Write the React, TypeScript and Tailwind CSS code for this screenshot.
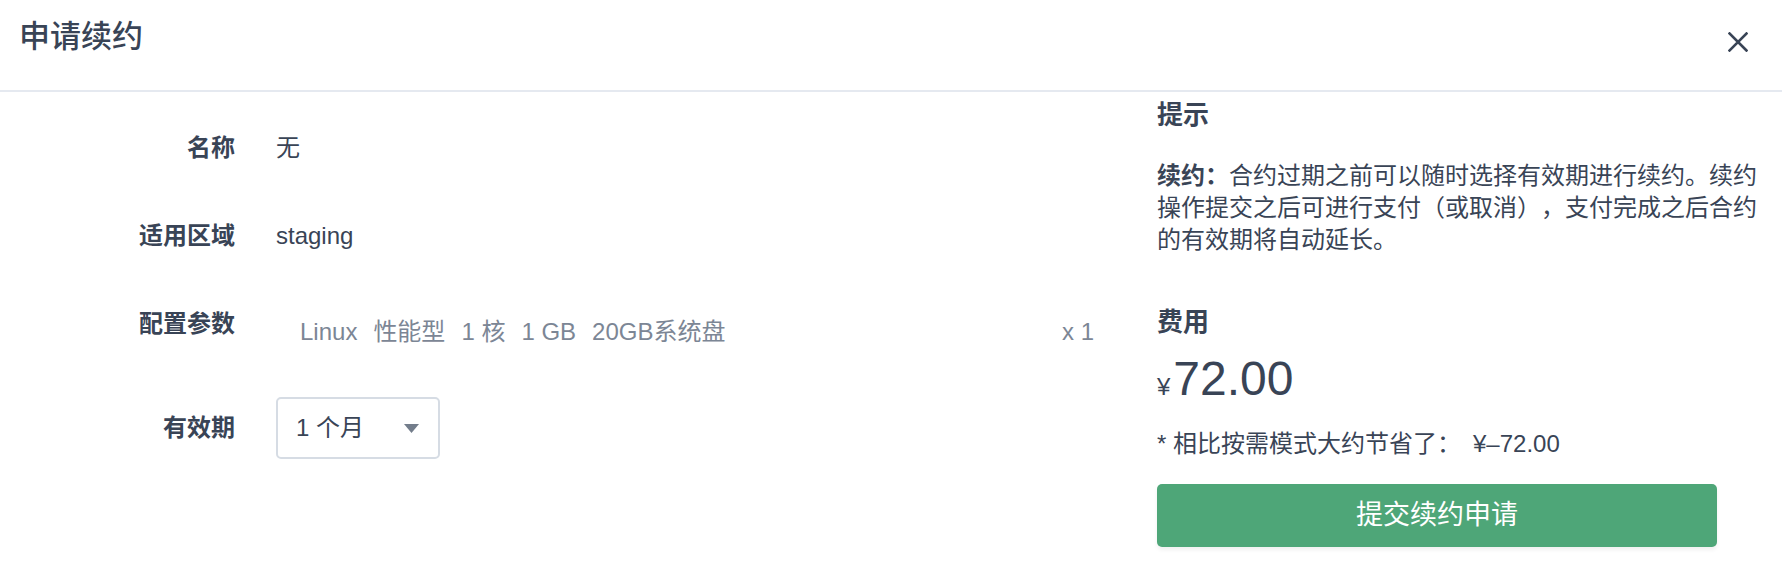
const font = "font-['Liberation_Sans','Noto_Sans_CJK_SC',sans-serif]";

function CloseIcon() {
  return (
    <svg width="20" height="20" viewBox="0 0 20 20" fill="none">
      <path d="M1.5 1.5L18.5 18.5M18.5 1.5L1.5 18.5" stroke="#394456" strokeWidth="2.6" strokeLinecap="square" />
    </svg>
  );
}

function Caret() {
  return (
    <svg width="15" height="9" viewBox="0 0 15 9">
      <polygon points="0,0 15,0 7.5,9" fill="#737d8b" />
    </svg>
  );
}

function Row({ label, children, className = "h-[40px]" }: { label: string; children: React.ReactNode; className?: string }) {
  return (
    <div className={`flex items-center ${className}`}>
      <div className="w-[235px] shrink-0 text-right text-[24px] font-semibold leading-[32px] text-[#394456]">{label}</div>
      <div className="ml-[41px] flex min-w-0 flex-1 items-center">{children}</div>
    </div>
  );
}

export default function App() {
  const specs = ["Linux", "性能型", "1 核", "1 GB", "20GB系统盘"];

  return (
    <div className={`min-h-screen bg-white ${font} text-[#394456] [text-spacing-trim:space-all]`}>
      <header className="flex h-[92px] items-start justify-between border-b-2 border-[#e5e9f0] pl-[19px] pr-[34px] pt-[18px]">
        <h1 className="text-[31px] font-medium leading-[38px]">申请续约</h1>
        <button className="mt-[14px]" aria-label="关闭">
          <CloseIcon />
        </button>
      </header>

      <div className="flex">
        <div className="flex w-[1094px] shrink-0 flex-col gap-[48px] pt-[36px]">
          <Row label="名称">
            <span className="text-[24px] leading-[32px]">无</span>
          </Row>
          <Row label="适用区域">
            <span className="text-[24px] leading-[32px]">staging</span>
          </Row>
          <Row label="配置参数">
            <div className="flex flex-1 items-center pt-[16px] text-[24px] leading-[32px] text-[#7c8695]">
              <div className="flex gap-[16px] pl-[24px]">
                {specs.map((s) => (
                  <span key={s}>{s}</span>
                ))}
              </div>
              <span className="ml-auto">x 1</span>
            </div>
          </Row>
          <Row label="有效期" className="mt-[5px] h-[62px]">
            <div className="flex h-[62px] w-[164px] items-center justify-between rounded-[5px] border-2 border-[#d6dce4] pl-[18px] pr-[19px] text-[24px] leading-[32px]">
              <span>1 个月</span>
              <Caret />
            </div>
          </Row>
        </div>

        <div className="ml-[63px] w-[610px] shrink-0 pt-[7px]">
          <h2 className="text-[26px] font-semibold leading-[32px]">提示</h2>
          <p className="mt-[29px] text-[24px] leading-[32px]">
            <span className="font-semibold">续约：</span>合约过期之前可以随时选择有效期进行续约。续约操作提交之后可进行支付（或取消），支付完成之后合约的有效期将自动延长。
          </p>

          <h2 className="mt-[50px] text-[26px] font-semibold leading-[32px]">费用</h2>
          <div className="mt-[13px] flex items-baseline">
            <span className="mr-[3px] text-[24px]">¥</span>
            <span className="text-[48px] leading-[56px]">72.00</span>
          </div>
          <p className="mt-[21px] text-[24px] leading-[32px]">
            * 相比按需模式大约节省了：<span className="ml-[12px]">¥–72.00</span>
          </p>

          <button className="mt-[24px] flex h-[63px] w-[560px] items-center justify-center rounded-[5px] bg-[#4ea678] text-[27px] text-white shadow-[0_3px_4px_rgba(0,0,0,0.06)]">
            提交续约申请
          </button>
        </div>
      </div>
    </div>
  );
}
